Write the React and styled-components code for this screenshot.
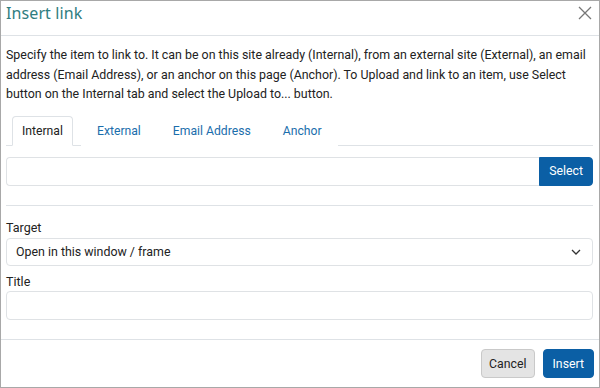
import React from "react";
import styled, { createGlobalStyle } from "styled-components";

const Global = createGlobalStyle`
  html, body { margin: 0; padding: 0; background: #fff; }
  body { font-family: Roboto, "Liberation Sans", Arial, sans-serif; color: #222; }
  * { box-sizing: border-box; }
`;

const Dialog = styled.div`
  width: 600px;
  height: 388px;
  border: 1px solid #a8a8a8;
  display: flex;
  flex-direction: column;
  background: #fff;
`;

const Header = styled.div`
  height: 35px;
  flex: none;
  border-bottom: 1px solid #dee2e6;
  display: flex;
  align-items: center;
  justify-content: space-between;
  padding: 0 6px 0 5px;
`;

const Title = styled.h1`
  margin: 0;
  font-family: "Noto Sans", "Open Sans", sans-serif;
  font-weight: 400;
  font-size: 16px;
  letter-spacing: 0.1px;
  color: #2f7d7f;
  line-height: 20px;
  margin-top: -11px;
`;

const Close = styled.button`
  border: 0;
  background: none;
  padding: 0;
  width: 16px;
  height: 16px;
  margin-top: -10px;
  display: flex;
  align-items: center;
  justify-content: center;
  cursor: pointer;
`;

const Body = styled.div`
  flex: 1;
  padding: 9px 6px 0 5px;
  display: flex;
  flex-direction: column;
`;

const Intro = styled.p`
  margin: 0;
  font-size: 12.4px;
  line-height: 19.6px;
  color: #222;
`;

const TabBar = styled.div`
  margin-top: 12px;
  display: flex;
  border-bottom: 1px solid #dee2e6;
  padding-left: 6px;
  height: 30px;
`;

const Tab = styled.div`
  height: 30px;
  padding: 0 ${(p) => (p.$active ? 9 : 15)}px;
  margin-left: ${(p) => (p.$ml ? p.$ml : 0)}px;
  display: flex;
  align-items: center;
  font-size: 12.2px;
  color: ${(p) => (p.$active ? "#222" : "#1b6eac")};
  border: 1px solid ${(p) => (p.$active ? "#dee2e6" : "transparent")};
  border-bottom-color: ${(p) => (p.$active ? "#fff" : "transparent")};
  border-radius: 4px 4px 0 0;
  margin-bottom: -1px;
  background: #fff;
`;

const InputGroup = styled.div`
  margin-top: 11px;
  display: flex;
  height: 29px;
`;

const TextInput = styled.input`
  flex: ${(p) => (p.$group ? 1 : "none")};
  height: 29px;
  border: 1px solid #dfe2e5;
  border-radius: ${(p) => (p.$group ? "4px 0 0 4px" : "4px")};
  ${(p) => (p.$group ? "border-right: 0;" : "")}
  padding: 0 9px;
  font-size: 12.5px;
  font-family: inherit;
  outline: none;
  width: 100%;
`;

const Button = styled.button`
  height: 29px;
  padding: 0 ${(p) => (p.$pad ? p.$pad : 9)}px;
  font-family: inherit;
  font-size: 12.3px;
  border-radius: ${(p) => (p.$group ? "0 4px 4px 0" : "4px")};
  border: 1px solid ${(p) => (p.$primary ? "#0b5fa5" : "#c9c9c9")};
  background: ${(p) => (p.$primary ? "#0b5fa5" : "#e4e4e4")};
  color: ${(p) => (p.$primary ? "#fff" : "#222")};
  cursor: pointer;
`;

const Divider = styled.hr`
  margin: 19px 0 0;
  border: 0;
  border-top: 1px solid #dee2e6;
`;

const Label = styled.label`
  display: block;
  font-size: 12.5px;
  line-height: 14px;
  color: #222;
  margin-top: ${(p) => (p.$mt ? p.$mt : 0)}px;
  margin-bottom: ${(p) => (p.$mb ? p.$mb : 2)}px;
`;

const SelectBox = styled.div`
  height: 28px;
  border: 1px solid #dfe2e5;
  border-radius: 4px;
  display: flex;
  align-items: center;
  justify-content: space-between;
  padding: 0 11px 0 9px;
  font-size: 12.4px;
  color: #222;
`;

const Footer = styled.div`
  flex: none;
  height: 48px;
  border-top: 1px solid #dee2e6;
  display: flex;
  align-items: center;
  justify-content: flex-end;
  gap: 8px;
  padding: 0 5px 0 0;
`;

export default function App() {
  return (
    <>
      <Global />
      <Dialog>
        <Header>
          <Title>Insert link</Title>
          <Close aria-label="Close">
            <svg width="14" height="14" viewBox="0 0 14 14">
              <path d="M1 1 L13 13 M13 1 L1 13" stroke="#777" strokeWidth="1.3" fill="none" />
            </svg>
          </Close>
        </Header>
        <Body>
          <Intro>
            Specify the item to link to. It can be on this site already (Internal), from an external site (External), an email
            address (Email Address), or an anchor on this page (Anchor). To Upload and link to an item, use Select
            button on the Internal tab and select the Upload to... button.
          </Intro>
          <TabBar>
            <Tab $active>Internal</Tab>
            <Tab $ml={8}>External</Tab>
            <Tab>Email Address</Tab>
            <Tab>Anchor</Tab>
          </TabBar>
          <InputGroup>
            <TextInput $group />
            <Button $primary $group>Select</Button>
          </InputGroup>
          <Divider />
          <Label $mt={15} $mb={3}>Target</Label>
          <SelectBox>
            <span>Open in this window / frame</span>
            <svg width="10" height="6" viewBox="0 0 10 6">
              <path d="M1 1 L5 5 L9 1" stroke="#333" strokeWidth="1.3" fill="none" />
            </svg>
          </SelectBox>
          <Label $mt={9}>Title</Label>
          <TextInput />
        </Body>
        <Footer>
          <Button $pad={7}>Cancel</Button>
          <Button $primary>Insert</Button>
        </Footer>
      </Dialog>
    </>
  );
}
